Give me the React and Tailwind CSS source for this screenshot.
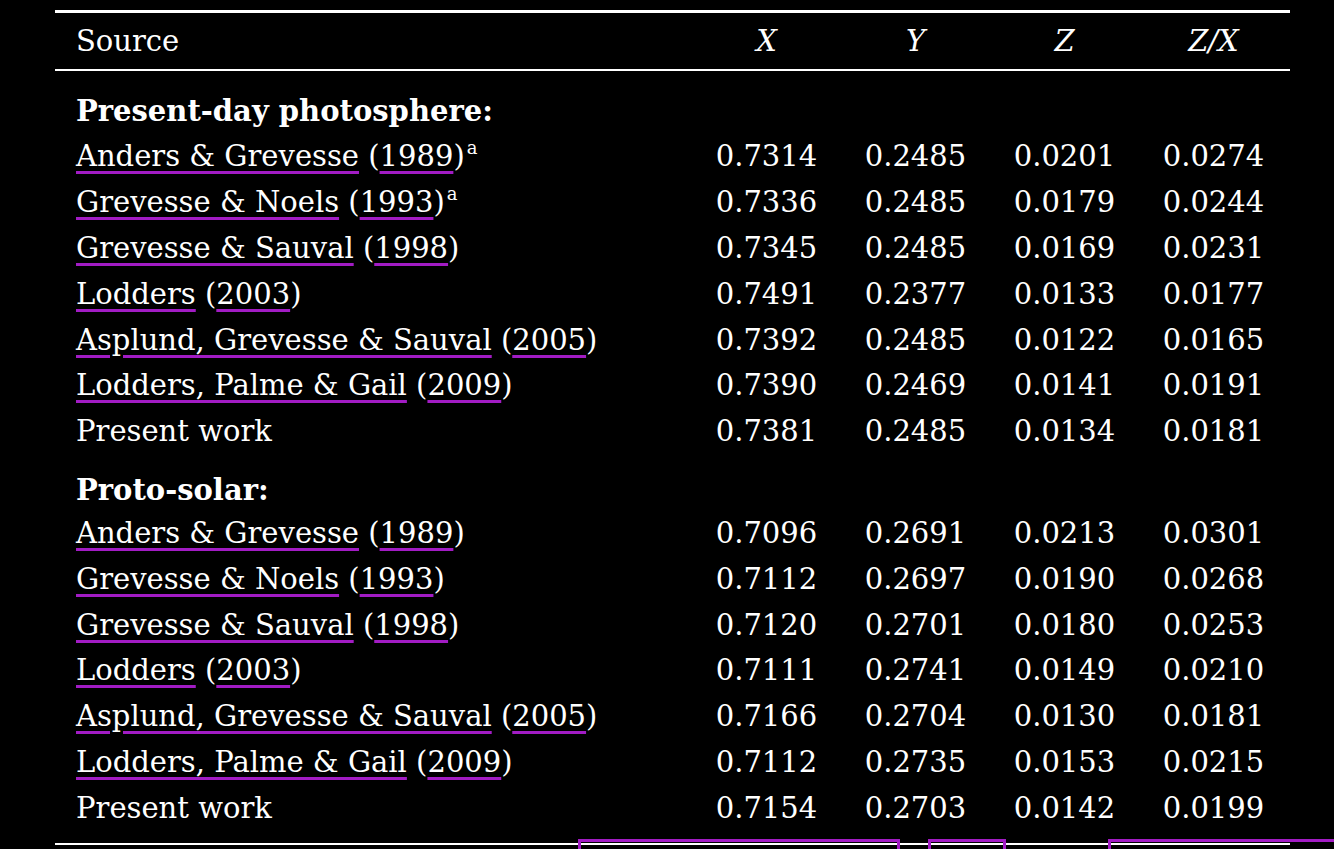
const sec1 = [
  [["Anders & Grevesse", "1989"], true, ["0.7314","0.2485","0.0201","0.0274"]],
  [["Grevesse & Noels", "1993"], true, ["0.7336","0.2485","0.0179","0.0244"]],
  [["Grevesse & Sauval", "1998"], false, ["0.7345","0.2485","0.0169","0.0231"]],
  [["Lodders", "2003"], false, ["0.7491","0.2377","0.0133","0.0177"]],
  [["Asplund, Grevesse & Sauval", "2005"], false, ["0.7392","0.2485","0.0122","0.0165"]],
  [["Lodders, Palme & Gail", "2009"], false, ["0.7390","0.2469","0.0141","0.0191"]],
  [null, false, ["0.7381","0.2485","0.0134","0.0181"]],
];
const sec2 = [
  [["Anders & Grevesse", "1989"], false, ["0.7096","0.2691","0.0213","0.0301"]],
  [["Grevesse & Noels", "1993"], false, ["0.7112","0.2697","0.0190","0.0268"]],
  [["Grevesse & Sauval", "1998"], false, ["0.7120","0.2701","0.0180","0.0253"]],
  [["Lodders", "2003"], false, ["0.7111","0.2741","0.0149","0.0210"]],
  [["Asplund, Grevesse & Sauval", "2005"], false, ["0.7166","0.2704","0.0130","0.0181"]],
  [["Lodders, Palme & Gail", "2009"], false, ["0.7112","0.2735","0.0153","0.0215"]],
  [null, false, ["0.7154","0.2703","0.0142","0.0199"]],
];
const U = "underline decoration-[#a21cc4] decoration-[3px] underline-offset-[5px]";
function Row({ r }) {
  const [src, sup, vals] = r;
  return (
    <div className="grid grid-cols-[616px_149px_149px_149px_149px] h-[45.8px] items-center">
      <div className="whitespace-nowrap">
        {src ? (
          <>
            <span className={U}>{src[0]}</span> (<span className={U}>{src[1]}</span>)
            {sup && <span className="text-[18px] relative top-[-12px] ml-[2px]">a</span>}
          </>
        ) : "Present work"}
      </div>
      {vals.map((v, i) => <div key={i} className="text-center">{v}</div>)}
    </div>
  );
}
export default function App() {
  return (
    <div className="w-[1334px] h-[849px] bg-black text-white overflow-hidden relative" style={{ fontFamily: '"DejaVu Serif", "Liberation Serif", serif' }}>
      <div className="ml-[55px] w-[1235px] pt-[10px] text-[29px] leading-none">
        <div className="h-[3px] bg-white" />
        <div className="grid grid-cols-[616px_149px_149px_149px_149px] pl-[21px] h-[56px] items-center">
          <div>Source</div>
          <div className="text-center italic">X</div>
          <div className="text-center italic">Y</div>
          <div className="text-center italic">Z</div>
          <div className="text-center italic">Z/X</div>
        </div>
        <div className="h-[2px] bg-white" />
        <div className="pl-[21px] pt-[18px]">
          <div className="font-bold h-[45px] flex items-center">Present-day photosphere:</div>
          {sec1.map((r, i) => <Row key={i} r={r} />)}
          <div className="font-bold h-[56px] flex items-end pb-[6px]">Proto-solar:</div>
          {sec2.map((r, i) => <Row key={i} r={r} />)}
        </div>
        <div className="mt-[12px] h-[2px] bg-white" />
      </div>
      <div className="absolute left-[578px] top-[839px] w-[322px] h-[30px] border-[3px] border-[#a21cc4]" />
      <div className="absolute left-[928px] top-[839px] w-[78px] h-[30px] border-[3px] border-[#a21cc4]" />
      <div className="absolute left-[1108px] top-[839px] w-[260px] h-[30px] border-[3px] border-[#a21cc4]" />
    </div>
  );
}
